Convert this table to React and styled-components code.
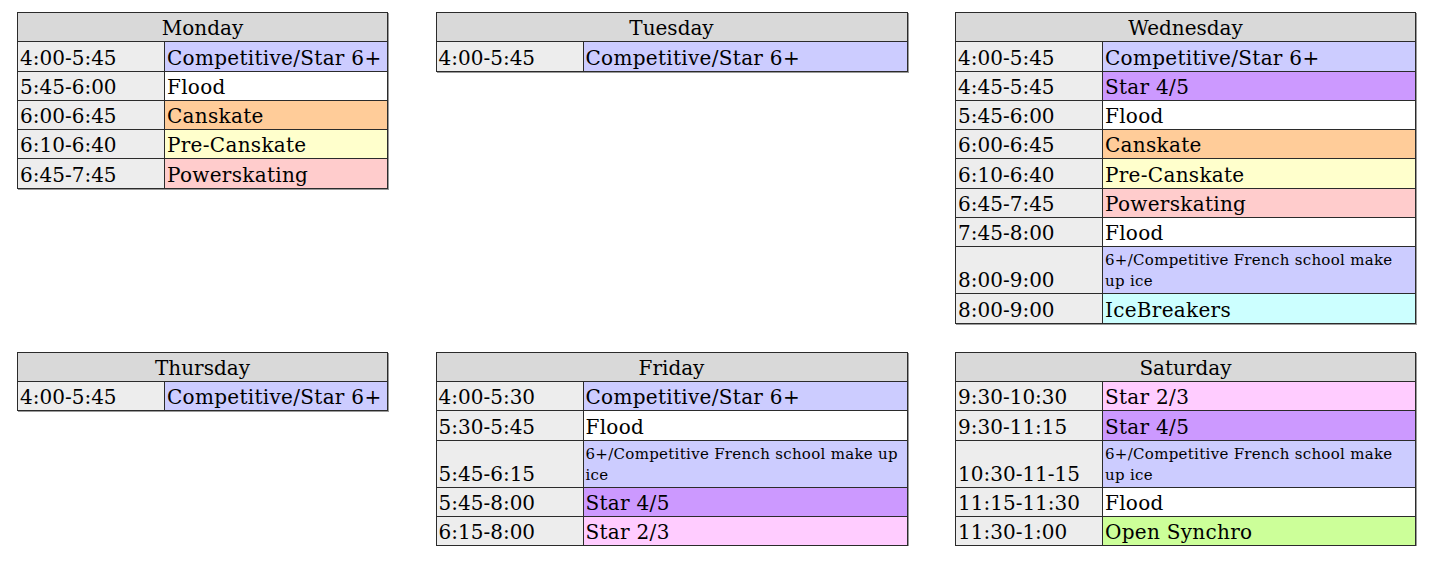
import styled, { createGlobalStyle } from 'styled-components'

const GlobalStyle = createGlobalStyle`
  html, body {
    margin: 0;
    padding: 0;
    background: #ffffff;
  }
  body {
    font-family: 'DejaVu Serif', 'Liberation Serif', serif;
    color: #000;
  }
`

const Page = styled.div`
  display: grid;
  grid-template-columns: 371px 472px 461px;
  column-gap: 47.5px;
  row-gap: 28px;
  align-items: start;
  padding: 12px 0 0 17px;
`

const Sheet = styled.table`
  width: 100%;
  border-collapse: collapse;
  table-layout: fixed;
  border: 1px solid #3a3a3a;
  box-shadow: 1px 1px 0 #9a9a9a;
  font-family: 'DejaVu Serif', 'Liberation Serif', serif;
`

const HeadCell = styled.th`
  height: 27.3px;
  padding: 0 3px 1px 3px;
  background: #d9d9d9;
  border: 1px solid #2b2b2b;
  font-weight: normal;
  font-size: 20px;
  line-height: 24px;
  vertical-align: bottom;
  text-align: center;
`

const TimeCell = styled.td`
  height: ${({ $tall }) => ($tall ? 45 : 27.3)}px;
  padding: 0 2px 1px 2px;
  background: #ededed;
  border: 1px solid #2b2b2b;
  font-size: 20px;
  line-height: 24px;
  vertical-align: bottom;
  white-space: nowrap;
`

const ActivityCell = styled.td`
  padding: 0 2px 1px 2px;
  background: ${({ $bg }) => $bg};
  border: 1px solid #2b2b2b;
  font-size: 20px;
  line-height: 24px;
  letter-spacing: 0.3px;
  vertical-align: bottom;
  white-space: nowrap;
  overflow: hidden;
`

const Note = styled.div`
  font-size: 15px;
  line-height: 21px;
  letter-spacing: 0.3px;
  white-space: nowrap;
`

const COLORS = {
  comp: '#ccccff',
  flood: '#ffffff',
  canskate: '#ffcc99',
  pre: '#ffffcc',
  power: '#ffcccc',
  star45: '#cc99ff',
  star23: '#ffccff',
  ice: '#ccffff',
  synchro: '#ccff99',
}

const NOTE = ['6+/Competitive French school make', 'up ice']

const DAYS = [
  {
    name: 'Monday',
    rows: [
      ['4:00-5:45', 'Competitive/Star 6+', 'comp'],
      ['5:45-6:00', 'Flood', 'flood'],
      ['6:00-6:45', 'Canskate', 'canskate'],
      ['6:10-6:40', 'Pre-Canskate', 'pre'],
      ['6:45-7:45', 'Powerskating', 'power'],
    ],
  },
  {
    name: 'Tuesday',
    rows: [['4:00-5:45', 'Competitive/Star 6+', 'comp']],
  },
  {
    name: 'Wednesday',
    rows: [
      ['4:00-5:45', 'Competitive/Star 6+', 'comp'],
      ['4:45-5:45', 'Star 4/5', 'star45'],
      ['5:45-6:00', 'Flood', 'flood'],
      ['6:00-6:45', 'Canskate', 'canskate'],
      ['6:10-6:40', 'Pre-Canskate', 'pre'],
      ['6:45-7:45', 'Powerskating', 'power'],
      ['7:45-8:00', 'Flood', 'flood'],
      ['8:00-9:00', NOTE, 'comp'],
      ['8:00-9:00', 'IceBreakers', 'ice'],
    ],
  },
  {
    name: 'Thursday',
    rows: [['4:00-5:45', 'Competitive/Star 6+', 'comp']],
  },
  {
    name: 'Friday',
    rows: [
      ['4:00-5:30', 'Competitive/Star 6+', 'comp'],
      ['5:30-5:45', 'Flood', 'flood'],
      ['5:45-6:15', ['6+/Competitive French school make up', 'ice'], 'comp'],
      ['5:45-8:00', 'Star 4/5', 'star45'],
      ['6:15-8:00', 'Star 2/3', 'star23'],
    ],
  },
  {
    name: 'Saturday',
    rows: [
      ['9:30-10:30', 'Star 2/3', 'star23'],
      ['9:30-11:15', 'Star 4/5', 'star45'],
      ['10:30-11-15', NOTE, 'comp'],
      ['11:15-11:30', 'Flood', 'flood'],
      ['11:30-1:00', 'Open Synchro', 'synchro'],
    ],
  },
]

const DayTable = ({ day }) => (
  <Sheet>
    <colgroup>
      <col style={{ width: 147 }} />
      <col />
    </colgroup>
    <thead>
      <tr>
        <HeadCell colSpan={2}>{day.name}</HeadCell>
      </tr>
    </thead>
    <tbody>
      {day.rows.map(([time, what, kind], i) => {
        const tall = Array.isArray(what)
        return (
          <tr key={i}>
            <TimeCell $tall={tall}>{time}</TimeCell>
            <ActivityCell $bg={COLORS[kind]}>
              {tall ? what.map((line) => <Note key={line}>{line}</Note>) : what}
            </ActivityCell>
          </tr>
        )
      })}
    </tbody>
  </Sheet>
)

export default function App() {
  return (
    <>
      <GlobalStyle />
      <Page>
        {DAYS.map((d) => (
          <DayTable key={d.name} day={d} />
        ))}
      </Page>
    </>
  )
}
